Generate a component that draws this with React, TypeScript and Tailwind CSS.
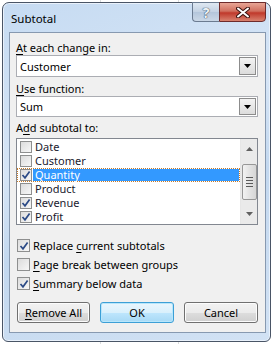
import React from "react";

const items = [
  { label: "Date", checked: false },
  { label: "Customer", checked: false },
  { label: "Quantity", checked: true, selected: true },
  { label: "Product", checked: false },
  { label: "Revenue", checked: true },
  { label: "Profit", checked: true },
];

const Check = ({ checked, size = "w-[12px] h-[12px]" }: { checked: boolean; size?: string }) => (
  <div
    className={`${size} shrink-0 border border-[#8e8f8f] bg-[linear-gradient(135deg,#dcdcdc,#f7f7f7)] flex items-center justify-center`}
  >
    {checked && (
      <svg width="10" height="10" viewBox="0 0 10 10">
        <path d="M1.5 5 L4 7.8 L8.6 1.6" fill="none" stroke="#2b4a86" strokeWidth="1.7" />
      </svg>
    )}
  </div>
);

const Combo = ({ value, h }: { value: string; h: string }) => (
  <div className={`${h} w-[242px] border border-[#abadb3] bg-white flex items-stretch`}>
    <div className="flex-1 pl-[3px] flex items-center">{value}</div>
    <div className="w-[17px] my-[1px] mr-[1px] border border-[#8c8c8c] bg-[linear-gradient(#f3f3f3,#dcdcdc)] flex items-center justify-center">
      <svg width="7" height="4" viewBox="0 0 7 4">
        <path d="M0 0 H7 L3.5 4 Z" fill="#000" />
      </svg>
    </div>
  </div>
);

const Btn = ({ children, w, primary }: { children: React.ReactNode; w: string; primary?: boolean }) => (
  <div
    className={`${w} h-[21px] rounded-[3px] border flex items-center justify-center ${
      primary
        ? "border-[#3c9fd6] bg-[linear-gradient(#eaf6fd_0%,#d9f0fc_50%,#bee6fd_51%,#a7d9f5_100%)] shadow-[inset_0_0_0_1px_#b8e6fb]"
        : "border-[#707070] bg-[linear-gradient(#f2f2f2_0%,#ebebeb_50%,#dddddd_51%,#cfcfcf_100%)] shadow-[inset_0_0_0_1px_#fcfcfc]"
    }`}
  >
    {children}
  </div>
);

export default function App() {
  return (
    <div
      className="w-[272px] h-[344px] overflow-hidden bg-white bg-[linear-gradient(90deg,transparent_100px,#dadcdd_100px,#dadcdd_101px,transparent_101px,transparent_178px,#dadcdd_178px,#dadcdd_179px,transparent_179px)] pt-[2px] pl-[2px] text-[11px] leading-[15px] text-black"
      style={{ fontFamily: '"Noto Sans", "Liberation Sans", sans-serif' }}
    >
      {/* window frame */}
      <div className="w-[269px] h-[340px] rounded-t-[7px] rounded-b-[6px] border border-[#4a5566] bg-[linear-gradient(160deg,#c6dbf2_0%,#d6e5f6_40%,#c3d8ef_60%,#d2e2f4_100%)] shadow-[inset_0_0_0_1px_#e9f1fb] flex flex-col">
        {/* title bar */}
        <div className="h-[29px] flex items-start justify-between">
          <div className="pl-[8px] pt-[8px] text-[11.5px]">Subtotal</div>
          <div className="flex mt-[-1px] mr-[4px]">
            <div className="w-[27px] h-[20px] rounded-bl-[4px] border border-[#6b7b90] border-r-0 bg-[linear-gradient(#dfe8f2,#c3d2e3_50%,#b4c6db_51%,#cbd8e7)] flex items-center justify-center">
              <span className="text-[14px] font-bold text-[#eef3f8] [text-shadow:0_0_1px_#2a3a50,0_0_1px_#2a3a50]">?</span>
            </div>
            <div className="w-[47px] h-[20px] rounded-br-[4px] border border-[#6e2b2b] bg-[linear-gradient(#e8a595,#d0705f_45%,#c0392b_55%,#d8826f)] flex items-center justify-center">
              <svg width="14" height="11" viewBox="0 0 14 11">
                <path d="M2 1.5 L12 9.5 M12 1.5 L2 9.5" stroke="#3b1410" strokeWidth="4" strokeLinecap="round" />
                <path d="M2 1.5 L12 9.5 M12 1.5 L2 9.5" stroke="#ffffff" strokeWidth="2" strokeLinecap="round" />
              </svg>
            </div>
          </div>
        </div>

        {/* client area */}
        <div className="ml-[6px] w-[257px] h-[301px] border border-[#8799b0] bg-[#f0f0f0] pl-[6px] pt-[7px] flex flex-col">
          <div className="h-[15px]">
            <span className="underline underline-offset-2">A</span>t each change in:
          </div>
          <Combo value="Customer" h="h-[22px]" />
          <div className="h-[15px] mt-[4px]">
            <span className="underline underline-offset-2">U</span>se function:
          </div>
          <Combo value="Sum" h="h-[21px]" />
          <div className="h-[15px] mt-[3px]">
            A<span className="underline underline-offset-2">d</span>d subtotal to:
          </div>

          {/* list box */}
          <div className="mt-[3px] w-[242px] h-[87px] border border-[#828790] bg-white flex">
            <div className="flex-1 pt-[1px] flex flex-col leading-[12px]">
              {items.map((it) => (
                <div key={it.label} className="h-[14px] flex items-center">
                  <div
                    className={`h-[14px] flex items-center flex-1 pl-[1px] ${
                      it.selected ? "border border-dotted border-[#c57a2a]" : "border border-transparent"
                    }`}
                  >
                    <div className="pl-[1px]">
                      <Check checked={it.checked} />
                    </div>
                    <div
                      className={`ml-[1px] pl-[2px] flex-1 h-[12px] flex items-center ${
                        it.selected ? "bg-[#3399ff] text-white" : "text-[#1a1a2e]"
                      }`}
                    >
                      {it.label}
                    </div>
                  </div>
                </div>
              ))}
            </div>
            {/* scrollbar */}
            <div className="w-[17px] bg-[#eaeaea] border-l border-[#e6e6e6] flex flex-col items-center">
              <div className="h-[20px] flex items-center justify-center">
                <svg width="7" height="4" viewBox="0 0 7 4">
                  <path d="M0 4 H7 L3.5 0 Z" fill="#606060" />
                </svg>
              </div>
              <div className="mt-[5px] w-[15px] h-[36px] rounded-[2px] border border-[#979797] bg-[linear-gradient(90deg,#f2f2f2,#e3e3e3_50%,#d6d6d6)] flex flex-col items-center justify-center gap-[2px]">
                <div className="w-[7px] h-[1px] bg-[#5a5a5a]" />
                <div className="w-[7px] h-[1px] bg-[#5a5a5a]" />
                <div className="w-[7px] h-[1px] bg-[#5a5a5a]" />
                <div className="w-[7px] h-[1px] bg-[#5a5a5a]" />
              </div>
              <div className="flex-1" />
              <div className="h-[20px] flex items-center justify-center">
                <svg width="7" height="4" viewBox="0 0 7 4">
                  <path d="M0 0 H7 L3.5 4 Z" fill="#606060" />
                </svg>
              </div>
            </div>
          </div>

          {/* options */}
          <div className="mt-[11px] flex flex-col">
            <div className="h-[19px] flex items-center pl-[1px] gap-[3px]">
              <Check checked size="w-[13px] h-[13px]" />
              <span>
                Replace <span className="underline underline-offset-2">c</span>urrent subtotals
              </span>
            </div>
            <div className="h-[19px] flex items-center pl-[1px] gap-[3px]">
              <Check checked={false} size="w-[13px] h-[13px]" />
              <span>
                <span className="underline underline-offset-2">P</span>age break between groups
              </span>
            </div>
            <div className="h-[19px] flex items-center pl-[1px] gap-[3px]">
              <Check checked size="w-[13px] h-[13px]" />
              <span>
                <span className="underline underline-offset-2">S</span>ummary below data
              </span>
            </div>
          </div>

          {/* buttons */}
          <div className="mt-[9px] pl-[1px] flex gap-[10px]">
            <Btn w="w-[73px]">
              <span>
                <span className="underline underline-offset-2">R</span>emove All
              </span>
            </Btn>
            <Btn w="w-[74px]" primary>
              OK
            </Btn>
            <Btn w="w-[74px]">Cancel</Btn>
          </div>
        </div>
      </div>
    </div>
  );
}
